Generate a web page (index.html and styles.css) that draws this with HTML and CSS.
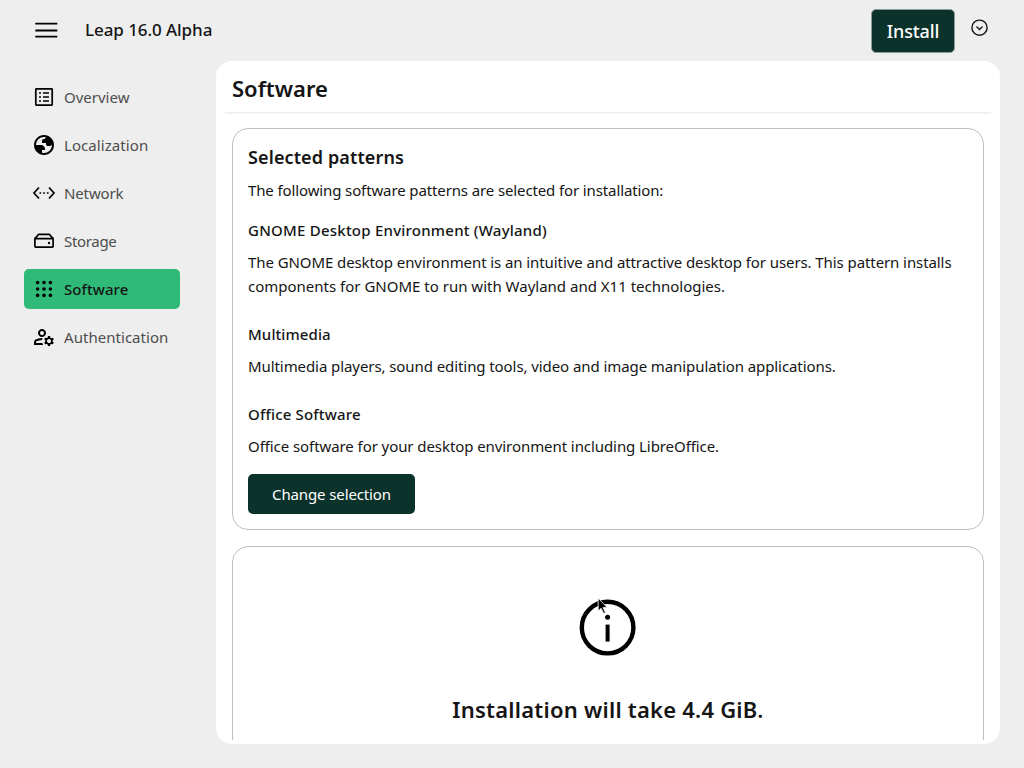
FILE: index.html
```html
<!DOCTYPE html>
<html lang="en">
<head>
<meta charset="utf-8">
<title>Leap 16.0 Alpha - Software</title>
<link rel="stylesheet" href="styles.css">
</head>
<body>
<div class="page">
  <header class="masthead">
    <button class="menu-toggle" aria-label="Main navigation">
      <svg width="24" height="24" viewBox="0 0 24 24"><path d="M1.3 4.700h22M1.300 11.500h22M1.300 17.700h22" stroke="#000" stroke-width="1.800"/></svg>
    </button>
    <span class="product">Leap 16.0 Alpha</span>
    <button class="install"><span>Install</span></button>
    <button class="options" aria-label="Options">
      <svg width="20" height="20" viewBox="0 0 20 20" fill="none" stroke="#151515" stroke-width="1.4"><circle cx="10.5" cy="9.700" r="7.600"/><path d="M7.500 8.500l3 3 3-3"/></svg>
    </button>
  </header>
  <div class="body">
    <nav class="sidebar">
      <a class="item"><svg class="icon" viewBox="0 0 24 24" fill="none" stroke="#000" stroke-width="1.7"><rect x="3.8" y="3.8" width="16.4" height="16.4" rx=".6"/><path d="M7 8h2M11 8h6M7 12h2M11 12h6M7 16h2M11 16h6"/></svg><span class="t-overview">Overview</span></a>
      <a class="item"><svg class="icon" viewBox="0 -960 960 960"><path d="M480-80q-83 0-156-31.5T197-197q-54-54-85.5-127T80-480q0-83 31.5-156T197-763q54-54 127-85.5T480-880q83 0 156 31.5T763-763q54 54 85.5 127T880-480q0 83-31.5 156T763-197q-54 54-127 85.5T480-80Zm0-80q134 0 227-93t93-227q0-7-.5-14.5T799-507q-5 29-27 48t-52 19h-80q-33 0-56.5-23.5T560-520v-40H400v-80q0-33 23.5-56.5T480-720h40q0-23 12.5-40.5T563-789q-20-5-40.5-8t-42.5-3q-134 0-227 93t-93 227h200q66 0 113 47t47 113v40H400v110q20 5 39.5 7.5T480-160Z"/></svg><span class="t-localization">Localization</span></a>
      <a class="item"><svg class="icon" viewBox="0 0 24 24" fill="none" stroke="#000" stroke-width="1.7"><path d="M7 6.500L2 12l5 5.500M17 6.500l5 5.500-5 5.500"/><path d="M7.500 12h1.700M11.200 12h1.700M14.900 12h1.700"/></svg><span class="t-network">Network</span></a>
      <a class="item"><svg class="icon" viewBox="0 0 24 24" fill="none" stroke="#000" stroke-width="1.7"><path d="M2.900 9.600h18.200v7.700q0 .8-.8.8H3.700q-.8 0-.8-.8ZM2.900 9.600l3.800-4.300h10.600l3.800 4.300"/><circle cx="17" cy="14" r="1.200" fill="#000" stroke="none"/></svg><span class="t-storage">Storage</span></a>
      <a class="item current"><svg class="icon" viewBox="0 0 24 24"><circle cx="5.6" cy="5.6" r="1.8"/><circle cx="12" cy="5.6" r="1.8"/><circle cx="18.4" cy="5.6" r="1.8"/><circle cx="5.6" cy="12" r="1.8"/><circle cx="12" cy="12" r="1.8"/><circle cx="18.4" cy="12" r="1.8"/><circle cx="5.6" cy="18.4" r="1.8"/><circle cx="12" cy="18.4" r="1.8"/><circle cx="18.4" cy="18.4" r="1.8"/></svg><span class="t-software">Software</span></a>
      <a class="item"><svg class="icon" viewBox="0 -960 960 960"><path d="M400-480q-66 0-113-47t-47-113q0-66 47-113t113-47q66 0 113 47t47 113q0 66-47 113t-113 47ZM80-160v-112q0-33 17-62t47-44q51-26 115-44t141-18h14q6 0 12 2-8 18-13.500 37.500T404-360h-4q-71 0-127.500 18T180-306q-9 5-14.500 14t-5.500 20v32h252q6 21 16 41.500t22 38.500H80Zm560 40-12-60q-12-5-22.500-10.500T584-204l-58 18-40-68 46-40q-2-14-2-26t2-26l-46-40 40-68 58 18q11-8 21.500-13.500T628-460l12-60h80l12 60q12 5 22.500 11t21.500 15l58-20 40 70-46 40q2 12 2 25t-2 25l46 40-40 68-58-18q-11 8-21.500 13.500T732-180l-12 60h-80Zm40-120q33 0 56.500-23.500T760-320q0-33-23.500-56.500T680-400q-33 0-56.500 23.500T600-320q0 33 23.500 56.500T680-240ZM400-560q33 0 56.500-23.500T480-640q0-33-23.500-56.500T400-720q-33 0-56.500 23.500T320-640q0 33 23.500 56.500T400-560Z"/></svg><span class="t-auth">Authentication</span></a>
    </nav>
    <main class="panel">
      <div class="panel-head"><h2><span class="t-title">Software</span></h2></div>
      <div class="content">
        <section class="card">
          <h3><span class="t-selected">Selected patterns</span></h3>
          <p class="intro"><span class="t-intro">The following software patterns are selected for installation:</span></p>
          <dl>
            <dt><span class="t-gnome">GNOME Desktop Environment (Wayland)</span></dt>
            <dd><span class="t-line1">The GNOME desktop environment is an intuitive and attractive desktop for users. This pattern installs</span><br><span class="t-line2">components for GNOME to run with Wayland and X11 technologies.</span></dd>
            <dt><span class="t-multi">Multimedia</span></dt>
            <dd><span class="t-multidesc">Multimedia players, sound editing tools, video and image manipulation applications.</span></dd>
            <dt><span class="t-office">Office Software</span></dt>
            <dd><span class="t-officedesc">Office software for your desktop environment including LibreOffice.</span></dd>
          </dl>
          <button class="change"><span class="t-change">Change selection</span></button>
        </section>
        <section class="card size">
          <div class="info">
            <svg width="68" height="68" viewBox="0 0 68 68"><circle cx="33.600" cy="34.600" r="25.800" fill="none" stroke="#000" stroke-width="4.400"/><circle cx="33.600" cy="24.300" r="2.500"/><rect x="31.600" y="31.600" width="4" height="17"/></svg>
            <svg class="cursor" width="14" height="20" viewBox="0 0 14 20"><path d="M1.200 1v13l2.900-2.700 2.600 5.200 1.800-.9-2.500-5h4.200Z" stroke="#fff" stroke-width=".8"/></svg>
          </div>
          <h2 class="amount"><span class="t-amount">Installation will take 4.4 GiB.</span></h2>
        </section>
      </div>
    </main>
  </div>
</div>
</body>
</html>
```
FILE: styles.css
```css
* { box-sizing: border-box; }
body { margin: 0; background: #eee; color: #151515; font: 15px/24px "Noto Sans", sans-serif; overflow: hidden; }
h2, h3, p, dl, dd { margin: 0; }
button { font: inherit; color: inherit; border: 0; padding: 0; background: none; }
span { white-space: nowrap; }
.page { display: flex; flex-direction: column; height: 768px; }
.masthead { display: flex; height: 61px; padding-left: 34px; flex: none; }
.menu-toggle { height: 24px; width: 24px; margin-top: 19px; }
.menu-toggle svg, .options svg { display: block; }
.product { margin: 18px auto 0 27px; font-size: 17px; font-weight: 500; letter-spacing: -.07px; }
.install { width: 84px; height: 44px; margin-top: 8.500px; border: 1px solid #8c9c99; border-radius: 5px; background: #0c322c; color: #fff; font-size: 18px; font-weight: 500; letter-spacing: -.1px; }
.options { width: 20px; height: 20px; margin: 18px 35px 0 14px; }
.body { display: flex; height: 683px; }
.sidebar { width: 216px; padding: 16px 36px 0 24px; display: flex; flex-direction: column; gap: 8px; }
.item { display: flex; align-items: center; gap: 8px; height: 40px; padding-left: 8px; border-radius: 5px; color: #4d4d4d; }
.icon { width: 24px; height: 24px; flex: none; }
.current { background: #30ba78; color: #151515; font-weight: 500; }
.panel { width: 784px; border-radius: 16px; background: #fff; overflow: hidden; }
.panel-head { height: 51px; margin: 0 7px; padding: 11px 9px 0; box-shadow: 0 2px 3px -2px #ccc; }
.panel-head h2 { font-size: 22px; line-height: 32px; font-weight: 600; }
.content { height: 628px; padding: 16px 16px 0; overflow: hidden; }
.card { border: 1px solid #c0c0c0; border-radius: 16px; padding: 16px 15px; height: 402px; }
h3 { font-size: 18px; line-height: 24px; font-weight: 600; }
.intro { margin-top: 9px; }
dl { margin-top: 16px; }
dt { font-weight: 500; margin-bottom: 8px; }
dd { margin-bottom: 24px; }
.change { display: block; margin-top: -8px; width: 167px; height: 40px; border-radius: 5px; background: #0c322c; color: #fff; }
.size { margin-top: 16px; height: 260px; padding-top: 46px; display: flex; flex-direction: column; align-items: center; }
.info { position: relative; width: 68px; height: 68px; }
.info svg { display: block; }
.info .cursor { position: absolute; left: 23px; top: 4px; }
.amount { margin-top: 32px; font-size: 22px; line-height: 32px; font-weight: 600; }

/* Per-string tracking */
.t-localization { letter-spacing: .07px; }
.t-network { letter-spacing: -.13px; }
.t-storage { letter-spacing: -.33px; }
.t-software { letter-spacing: .07px; }
.t-auth { letter-spacing: .04px; }
.t-selected { letter-spacing: .12px; }
.t-intro { letter-spacing: -.12px; }
.t-gnome { letter-spacing: .23px; }
.t-line1 { letter-spacing: -.086px; }
.t-multi { letter-spacing: .1px; }
.t-multidesc { letter-spacing: -.08px; }
.t-office { letter-spacing: .17px; }
.t-officedesc { letter-spacing: -.075px; }
.t-change { letter-spacing: -.12px; }
.t-amount { letter-spacing: .23px; }
```
